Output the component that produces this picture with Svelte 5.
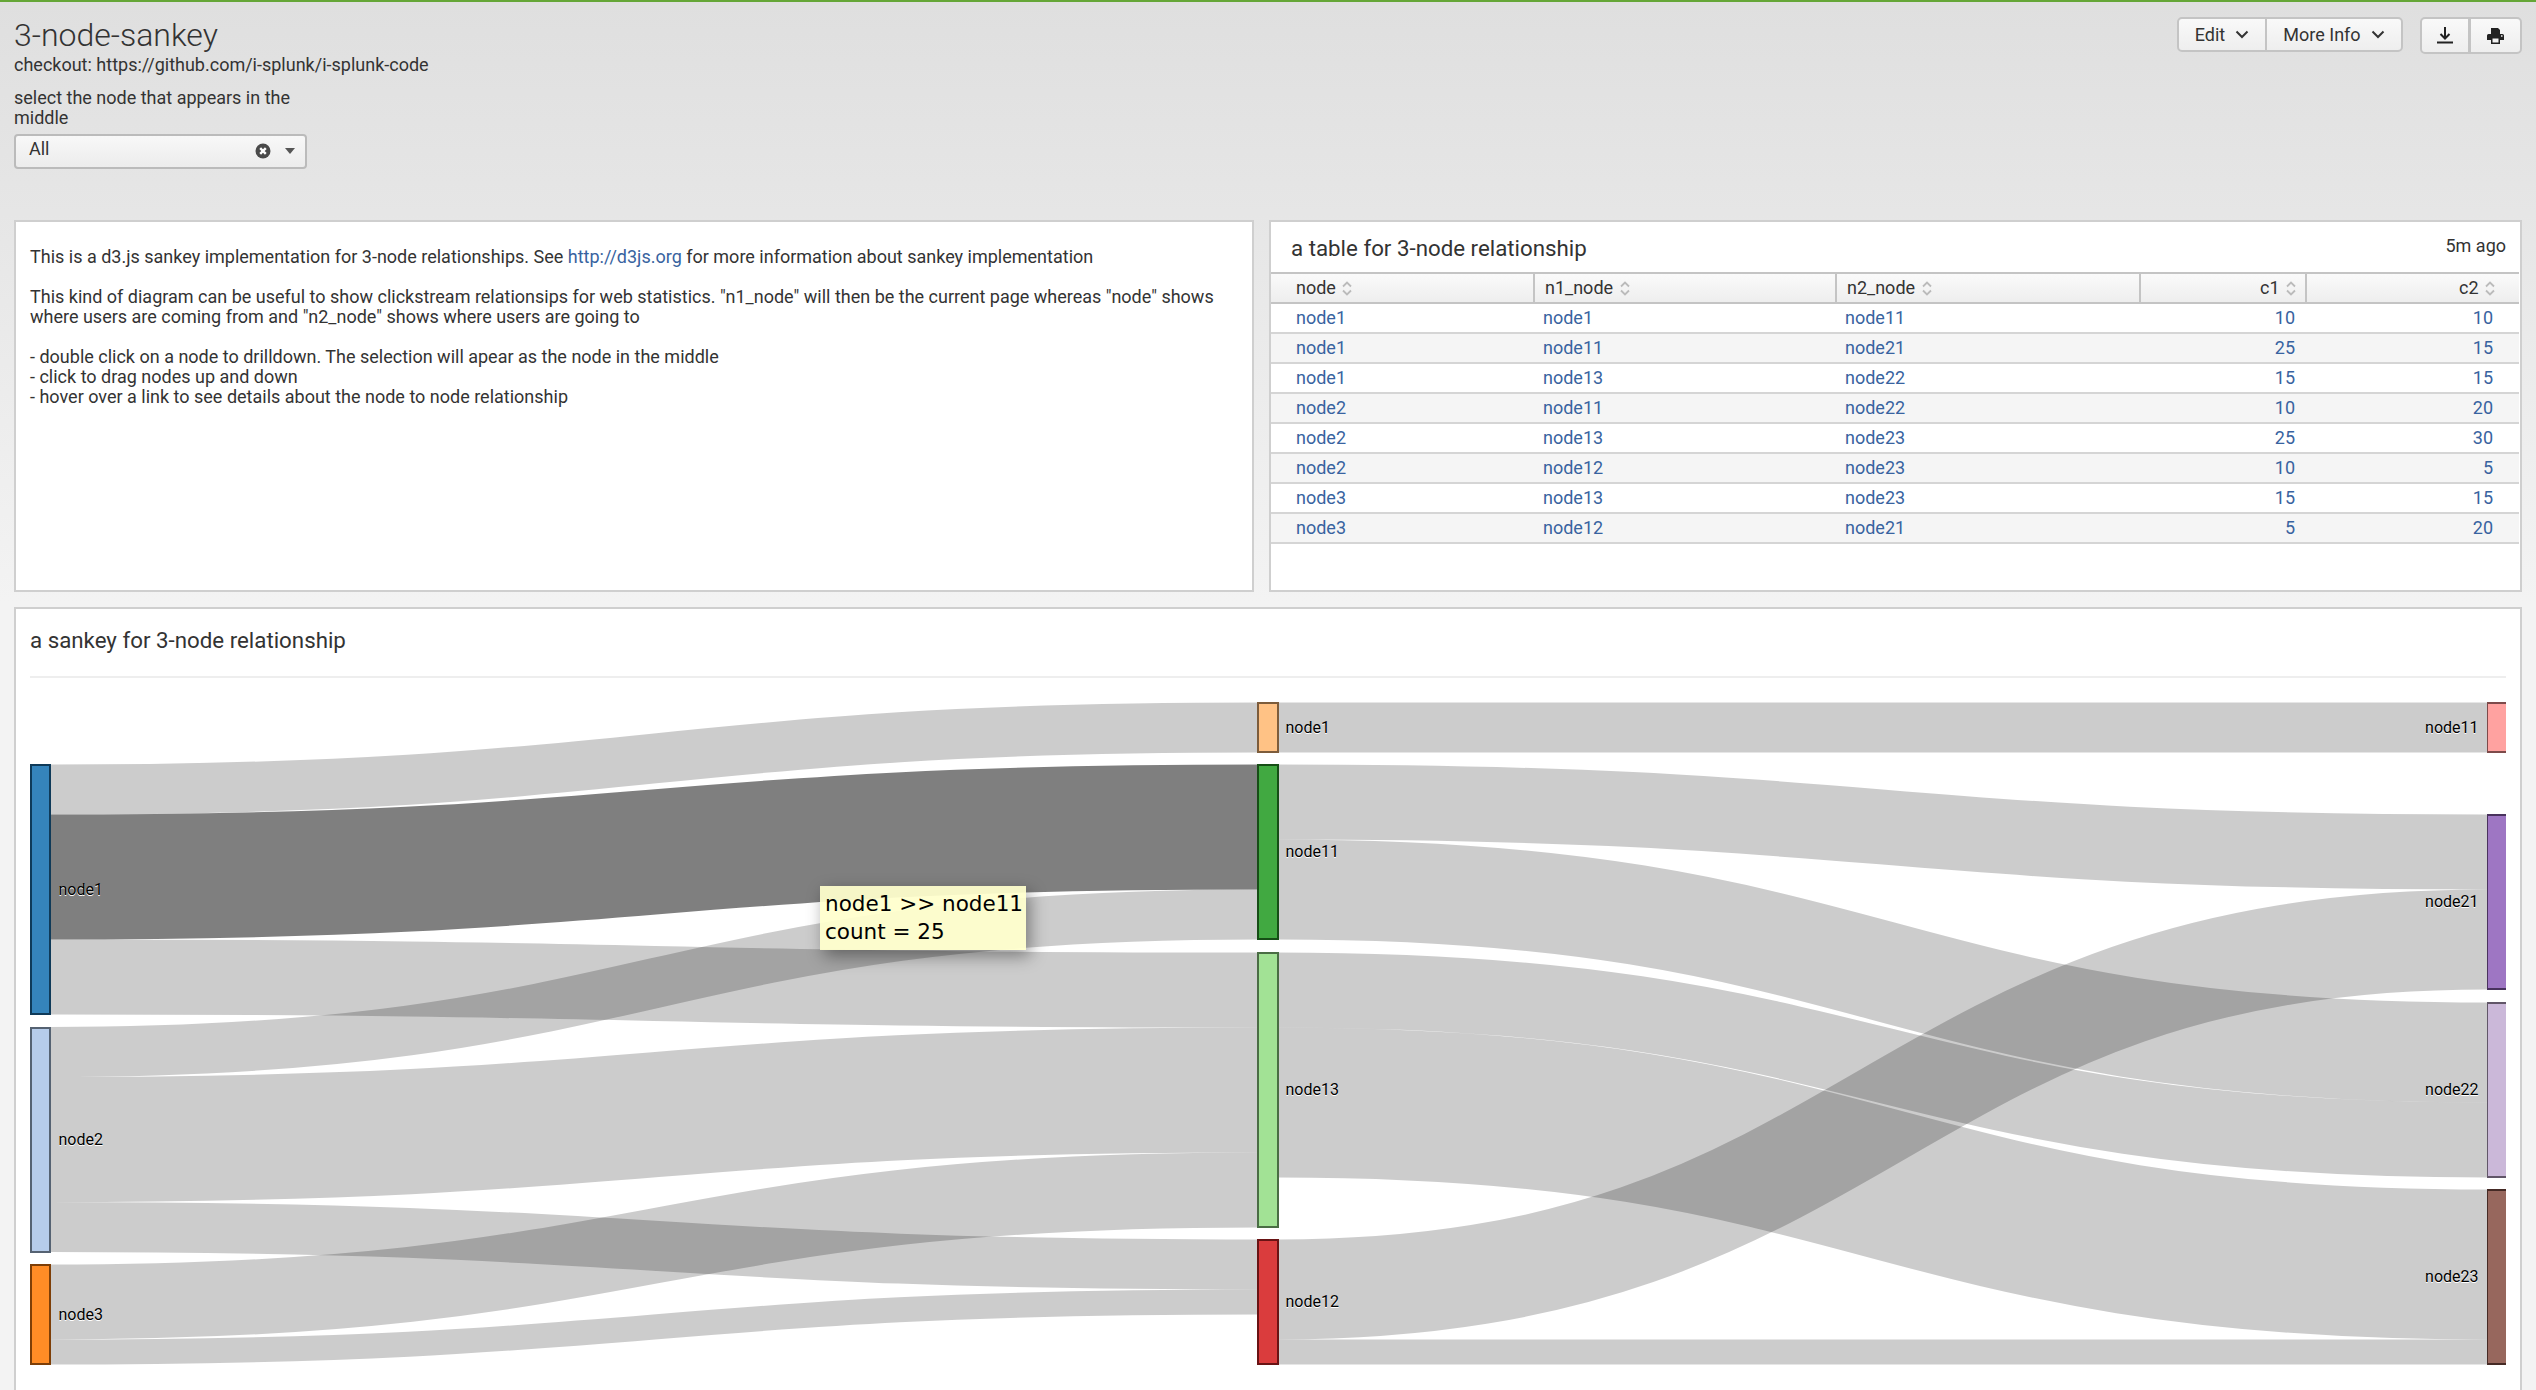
<script>
  const rows = [
    ['node1', 'node1', 'node11', 10, 10],
    ['node1', 'node11', 'node21', 25, 15],
    ['node1', 'node13', 'node22', 15, 15],
    ['node2', 'node11', 'node22', 10, 20],
    ['node2', 'node13', 'node23', 25, 30],
    ['node2', 'node12', 'node23', 10, 5],
    ['node3', 'node13', 'node23', 15, 15],
    ['node3', 'node12', 'node21', 5, 20]
  ];
  const headers = [
    { label: 'node' },
    { label: 'n1_node' },
    { label: 'n2_node' },
    { label: 'c1', num: true },
    { label: 'c2', num: true }
  ];

  const col1 = 31, col2 = 1258, col3 = 2487;

  const nodes = [
    { name: 'node1', x: col1, w: 19, y: 765, h: 249, fill: '#1f77b4' },
    { name: 'node2', x: col1, w: 19, y: 1028, h: 224, fill: '#aec7e8' },
    { name: 'node3', x: col1, w: 19, y: 1265, h: 99, fill: '#ff7f0e' },
    { name: 'node1', x: col2, w: 20, y: 703, h: 49, fill: '#ffbb78' },
    { name: 'node11', x: col2, w: 20, y: 765, h: 174, fill: '#2ca02c' },
    { name: 'node13', x: col2, w: 20, y: 953, h: 274, fill: '#98df8a' },
    { name: 'node12', x: col2, w: 20, y: 1240, h: 124, fill: '#d62728' },
    { name: 'node11', x: col3, w: 20, y: 703, h: 49, fill: '#ff9896', right: true },
    { name: 'node21', x: col3, w: 20, y: 815, h: 174, fill: '#9467bd', right: true },
    { name: 'node22', x: col3, w: 20, y: 1003, h: 174, fill: '#c5b0d5', right: true },
    { name: 'node23', x: col3, w: 20, y: 1190, h: 174, fill: '#8c564b', right: true }
  ];

  // [x0, y0, x1, y1, width, highlighted]
  const links = [
    [col1 + 19, 789.5, col2, 727.5, 50],
    [col1 + 19, 877, col2, 827, 125, true],
    [col1 + 19, 977, col2, 990, 75],
    [col1 + 19, 1052, col2, 914.5, 50],
    [col1 + 19, 1139.5, col2, 1090, 125],
    [col1 + 19, 1227, col2, 1264.5, 50],
    [col1 + 19, 1302, col2, 1190, 75],
    [col1 + 19, 1352, col2, 1302, 25],
    [col2 + 20, 727.5, col3, 727.5, 50],
    [col2 + 20, 802, col3, 852, 75],
    [col2 + 20, 889.5, col3, 1052.5, 100],
    [col2 + 20, 990, col3, 1140, 75],
    [col2 + 20, 1102.5, col3, 1264.5, 150],
    [col2 + 20, 1289.5, col3, 939.5, 100],
    [col2 + 20, 1352, col3, 1352, 25]
  ];

  function linkPath([x0, y0, x1, y1]) {
    const xm = (x0 + x1) / 2;
    return `M${x0},${y0}C${xm},${y0} ${xm},${y1} ${x1},${y1}`;
  }

  function darker(hex) {
    const n = parseInt(hex.slice(1), 16);
    const c = [n >> 16, (n >> 8) & 255, n & 255].map((v) => Math.round(v * 0.49));
    return `rgb(${c.join(',')})`;
  }
</script>

<div class="page">
  <header class="top">
    <div class="intro">
      <h1>3-node-sankey</h1>
      <p class="desc">checkout: https://github.com/i-splunk/i-splunk-code</p>
      <label class="field-label" for="middle-node">select the node that appears in the middle</label>
      <div class="select" id="middle-node">
        <span>All</span>
        <svg class="clear" width="16" height="16" viewBox="0 0 16 16">
          <circle cx="8" cy="8" r="7.5" fill="#4a4a4a" />
          <path d="M5.2 5.2l5.6 5.6M10.8 5.2l-5.6 5.6" stroke="#fff" stroke-width="2.4" />
        </svg>
        <svg class="caret" width="10" height="6" viewBox="0 0 10 6"><path d="M0 0h10L5 6z" fill="#555" /></svg>
      </div>
    </div>
    <div class="actions">
      <div class="btn-group">
        <button class="edit">Edit
          <svg width="14" height="9" viewBox="0 0 14 9"><path d="M1.5 1.5L7 7l5.5-5.5" fill="none" stroke="#333" stroke-width="2" /></svg>
        </button>
        <button class="info">More Info
          <svg width="14" height="9" viewBox="0 0 14 9"><path d="M1.5 1.5L7 7l5.5-5.5" fill="none" stroke="#333" stroke-width="2" /></svg>
        </button>
      </div>
      <div class="btn-group icons">
        <button aria-label="Export">
          <svg width="16" height="17" viewBox="0 0 16 17"><path d="M8 0v11M3.5 7L8 11.5 12.5 7M0 15.5h16" fill="none" stroke="#222" stroke-width="2" /></svg>
        </button>
        <button aria-label="Print">
          <svg width="17" height="16" viewBox="0 0 17 16"><path d="M4 0h7l2 2v4h2.500a1.500 1.500 0 0 1 1.500 1.500V12h-4v4H4v-4H0V7.500A1.500 1.500 0 0 1 1.500 6H4z" fill="#222" /><path d="M5.500 10.500h6V14.500h-6z" fill="#f3f3f3" /><path d="M14 8h1.500" stroke="#f3f3f3" stroke-width="1.500" /></svg>
        </button>
      </div>
    </div>
  </header>

  <section class="row">
    <div class="panel text">
      <p>This is a d3.js sankey implementation for 3-node relationships. See <a href="#d3">http://d3js.org</a> for more information about sankey implementation</p>
      <p>This kind of diagram can be useful to show clickstream relationsips for web statistics. "n1_node" will then be the current page whereas "node" shows<br />where users are coming from and "n2_node" shows where users are going to</p>
      <p>- double click on a node to drilldown. The selection will apear as the node in the middle<br />- click to drag nodes up and down<br />- hover over a link to see details about the node to node relationship</p>
    </div>
    <div class="panel table-panel">
      <div class="table-head">
        <h2>a table for 3-node relationship</h2>
        <span class="age">5m ago</span>
      </div>
      <table>
        <colgroup>
          <col style="width: 263px" /><col style="width: 302px" /><col style="width: 304px" /><col style="width: 166px" /><col />
        </colgroup>
        <thead>
          <tr>
            {#each headers as h}
              <th class:num={h.num}>{h.label}
                <svg class="sort" width="10" height="15" viewBox="0 0 10 15"><path d="M1 5.500L5 1.500l4 4M1 9.500l4 4 4-4" fill="none" stroke="#bbb" stroke-width="1.800" /></svg>
              </th>
            {/each}
          </tr>
        </thead>
        <tbody>
          {#each rows as r}
            <tr>
              <td>{r[0]}</td><td>{r[1]}</td><td>{r[2]}</td><td class="num">{r[3]}</td><td class="num">{r[4]}</td>
            </tr>
          {/each}
        </tbody>
      </table>
    </div>
  </section>

  <section class="panel chart">
    <h2>a sankey for 3-node relationship</h2>
    <div class="chart-body">
      <svg class="sankey" width="2476" height="712" viewBox="30 678 2476 712">
        <defs>
          <clipPath id="right-col"><rect x={col3} y="690" width="20" height="700" /></clipPath>
        </defs>
        {#each links as l}
          <path class="link" class:hot={l[5]} d={linkPath(l)} stroke-width={l[4]} />
        {/each}
        {#each nodes as n}
          <rect class="node" x={n.x} y={n.y} width={n.w} height={n.h} fill={n.fill} stroke={darker(n.fill)} clip-path={n.right ? 'url(#right-col)' : undefined} />
          {#if n.right}
            <text class="label" x={n.x - 8.500} y={n.y + n.h / 2 + 5} text-anchor="end">{n.name}</text>
          {:else}
            <text class="label" x={n.x + 27.500} y={n.y + n.h / 2 + 5}>{n.name}</text>
          {/if}
        {/each}
      </svg>
      <div class="tip">node1 &gt;&gt; node11<br />count = 25</div>
    </div>
  </section>
</div>

<style>
  :global(body) {
    margin: 0;
    background: #f3f3f3;
  }

  .page {
    height: 1390px;
    overflow: hidden;
    box-sizing: border-box;
    border-top: 2px solid #65a637;
    padding: 0 14px;
    background: linear-gradient(#dfdfdf, #f3f3f3 600px);
    font-family: Roboto, sans-serif;
    font-size: 18px;
    color: #333;
  }

  .top {
    display: flex;
    justify-content: space-between;
    height: 218px;
  }

  h1 {
    margin: 14px 0 0;
    font-size: 32px;
    line-height: 38px;
    font-weight: 300;
    color: #333;
  }

  .desc {
    margin: 0;
    line-height: 22px;
  }

  .field-label {
    display: block;
    width: 300px;
    margin-top: 12px;
    line-height: 20px;
  }

  .select {
    display: flex;
    align-items: center;
    box-sizing: border-box;
    width: 293px;
    height: 35px;
    margin-top: 6px;
    padding: 0 10px 2px 13px;
    border: 2px solid #bbb;
    border-radius: 4px;
    background: linear-gradient(#f8f8f8, #ececec);
  }

  .select span {
    flex: 1;
    margin-top: -4px;
  }

  .clear {
    margin-right: 14px;
  }

  .actions {
    display: flex;
    gap: 17px;
    margin-top: 15px;
    align-items: flex-start;
  }

  .btn-group {
    display: flex;
    height: 35px;
    border: 2px solid #c4c4c4;
    border-radius: 5px;
    box-sizing: border-box;
    background: linear-gradient(#f9f9f9, #eeeeee);
  }

  .btn-group.icons {
    height: 37px;
  }

  button {
    display: flex;
    align-items: center;
    justify-content: center;
    gap: 10px;
    border: 0;
    padding: 0;
    background: none;
    font: inherit;
    color: #333;
  }

  .edit {
    width: 88px;
    border-right: 2px solid #c4c4c4;
  }

  .info {
    width: 134px;
  }

  .icons button {
    width: 49px;
  }

  .icons button:first-child {
    border-right: 3px solid #c4c4c4;
  }

  .row {
    display: grid;
    grid-template-columns: 1240px 1253px;
    gap: 15px;
    height: 372px;
    margin-bottom: 15px;
  }

  .panel {
    box-sizing: border-box;
    background: #fff;
    border: 2px solid #cfcfcf;
  }

  .text {
    padding: 12px 14px;
    line-height: 20px;
  }

  .text p {
    margin: 13px 0 20px;
  }

  a {
    color: #3863a0;
    text-decoration: none;
  }

  .table-head {
    display: flex;
    justify-content: space-between;
    height: 50px;
    padding: 0 14px 0 20px;
  }

  h2 {
    margin: 0;
    font-size: 22.300px;
    font-weight: 400;
    color: #333;
    line-height: 26px;
  }

  .table-head h2 {
    margin-top: 13px;
  }

  .age {
    margin-top: 13px;
  }

  table {
    width: 1248px;
    table-layout: fixed;
    border-collapse: collapse;
  }

  th {
    height: 30px;
    padding: 0 0 1px 25px;
    box-sizing: border-box;
    text-align: left;
    font-weight: 400;
    color: #333;
    border-top: 2px solid #c4c4c4;
    border-bottom: 2px solid #c4c4c4;
    border-right: 2px solid #c4c4c4;
    background: linear-gradient(#fafafa, #eeeeee);
  }

  th:last-child {
    border-right: 0;
  }

  th + th {
    padding-left: 10px;
  }

  th.num {
    padding: 0 9px 1px 0;
    text-align: right;
  }

  th.num:last-child {
    padding-right: 24px;
  }

  .sort {
    vertical-align: -2px;
    margin-left: 2px;
  }

  td {
    height: 30px;
    padding: 0 0 2px 25px;
    box-sizing: border-box;
    color: #3863a0;
    border-bottom: 2px solid #d5d5d5;
  }

  td + td {
    padding-left: 9px;
  }

  td.num {
    padding: 0 11px 2px 0;
    text-align: right;
  }

  td.num:last-child {
    padding-right: 26px;
  }

  tbody tr:nth-child(even) {
    background: #f5f5f5;
  }

  .chart {
    height: 800px;
    padding: 0 14px;
  }

  .chart > h2 {
    height: 69px;
    padding-top: 18px;
    box-sizing: border-box;
    border-bottom: 2px solid #eeeeee;
  }

  .chart-body {
    position: relative;
  }

  .sankey {
    display: block;
  }

  .link {
    fill: none;
    stroke: #000;
    stroke-opacity: 0.2;
  }

  .link.hot {
    stroke-opacity: 0.5;
  }

  .node {
    fill-opacity: 0.9;
    stroke-width: 2;
    shape-rendering: crispEdges;
  }

  .label {
    font-size: 16px;
    fill: #000;
    text-shadow: 0 1px 0 #fff;
  }

  .tip {
    position: absolute;
    left: 790px;
    top: 208px;
    box-sizing: border-box;
    width: 206px;
    height: 64px;
    padding: 4px 5px;
    white-space: nowrap;
    background: rgba(255, 255, 204, 0.93);
    box-shadow: 4px 6px 16px rgba(0, 0, 0, 0.4);
    font-family: "DejaVu Sans", sans-serif;
    font-size: 21.500px;
    line-height: 28px;
    color: #000;
  }
</style>
